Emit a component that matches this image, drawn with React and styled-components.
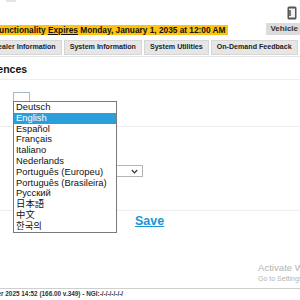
import styled, { createGlobalStyle } from "styled-components"

const Global = createGlobalStyle`
  html, body { margin: 0; padding: 0; background: #fff; overflow: hidden; }
  body { font-family: "Liberation Sans", Arial, sans-serif; color: #111; }
`

const Page = styled.div`
  width: 300px;
  height: 300px;
  position: relative;
  overflow: hidden;
  display: flex;
  flex-direction: column;
`

const TopStrip = styled.div`
  height: 23px;
  display: flex;
  justify-content: space-between;
  align-items: flex-start;
`

const Tick = styled.div`
  width: 10px;
  height: 2px;
  margin-left: 6px;
  background: #e4e4e4;
`

const DeviceIcon = styled.svg`
  width: 10px;
  height: 14px;
  margin-top: 6px;
  margin-right: 3px;
`

const BannerRow = styled.div`
  height: 12px;
  display: flex;
  justify-content: space-between;
  align-items: flex-end;
`

const Banner = styled.div`
  background: #ffc20e;
  height: 10px;
  line-height: 10px;
  font-size: 8.3px;
  font-weight: bold;
  white-space: nowrap;
  padding-right: 3px;
  margin-left: -6px;
  & u { text-decoration: underline; }
`

const VehicleButton = styled.div`
  background: #dcdcdc;
  height: 12px;
  line-height: 12px;
  font-size: 8px;
  font-weight: bold;
  padding: 0 6px 0 4px;
  margin-right: -4px;
  color: #333;
`

const Tabs = styled.div`
  margin-top: 5px;
  height: 15px;
  display: flex;
  gap: 2px;
  border-bottom: 1px solid #e4e4e4;
  padding-bottom: 1px;
`

const Tab = styled.div`
  background: #e6e6e6;
  border: 1px solid #d6d6d6;
  height: 13px;
  line-height: 13px;
  font-size: 7.1px;
  font-weight: bold;
  color: #222;
  padding: 0 5px;
  white-space: nowrap;
  margin-left: ${(p) => p.shift || "0"};
`

const Heading = styled.h2`
  margin: 5px 0 0 -33px;
  height: 12px;
  font-size: 10.5px;
  font-weight: bold;
  line-height: 14px;
  border-bottom: 1px solid #eeeeee;
  padding-bottom: 5px;
`

const FormRow = styled.div`
  height: ${(p) => p.h}px;
  border-bottom: 1px solid #eeeeee;
  position: relative;
  padding-left: 13px;
  box-sizing: border-box;
`

const SmallBox = styled.div`
  width: 15px;
  height: 9px;
  margin-top: 12px;
  border: 1px solid #a9b8c8;
  border-bottom: none;
`

const Select = styled.div`
  margin-top: 38px;
  width: 130px;
  height: 12px;
  border: 1px solid #b5b5b5;
  box-sizing: border-box;
  display: flex;
  justify-content: flex-end;
  align-items: center;
  padding-right: 4px;
`

const List = styled.ul`
  position: absolute;
  left: 13px;
  top: 101px;
  width: 104px;
  margin: 0;
  padding: 0;
  list-style: none;
  background: #fff;
  border: 1px solid #7a7a7a;
  box-sizing: border-box;
  z-index: 2;
`

const Option = styled.li`
  height: 10.8px;
  line-height: 10.8px;
  font-size: 9.4px;
  padding-left: 2px;
  font-family: "Liberation Sans", "Noto Sans CJK JP", sans-serif;
  background: ${(p) => (p.active ? "#2a9fdb" : "transparent")};
  color: ${(p) => (p.active ? "#fff" : "#111")};
  white-space: nowrap;
`

const SaveRow = styled.div`
  padding-left: 135px;
  padding-top: 0;
`

const SaveLink = styled.a`
  color: #1a96d4;
  font-size: 12.5px;
  font-weight: bold;
  text-decoration: underline;
  cursor: pointer;
`

const Spacer = styled.div`
  flex: 1;
`

const Footer = styled.div`
  border-top: 1px solid #cfcfcf;
  height: 11px;
  font-size: 6.4px;
  font-weight: bold;
  color: #333;
  line-height: 10px;
  white-space: nowrap;
  margin-left: -21px;
`

const Watermark = styled.div`
  position: absolute;
  left: 258px;
  top: 263px;
  color: #b4b4b4;
  white-space: nowrap;
  line-height: 1;
`

const WatermarkTitle = styled.div`
  font-size: 9.6px;
`

const WatermarkNote = styled.div`
  font-size: 7px;
  margin-top: 2px;
`

const Chevron = () => (
  <svg width="7" height="5" viewBox="0 0 7 5">
    <path d="M0.8 1 L3.5 3.8 L6.2 1" fill="none" stroke="#333" strokeWidth="1.2" />
  </svg>
)

const languages = [
  "Deutsch",
  "English",
  "Español",
  "Français",
  "Italiano",
  "Nederlands",
  "Português (Europeu)",
  "Português (Brasileira)",
  "Русский",
  "日本語",
  "中文",
  "한국의",
]

export default function App() {
  return (
    <Page>
      <Global />
      <TopStrip>
        <Tick />
        <DeviceIcon viewBox="0 0 10 14">
          <rect x="0.5" y="0.5" width="9" height="13" rx="1.5" fill="#555" />
          <rect x="2" y="2.5" width="6" height="9" fill="#f2f2f2" />
          <rect x="2" y="4" width="2" height="6" fill="#777" />
        </DeviceIcon>
      </TopStrip>
      <BannerRow>
        <Banner>
          Functionality <u>Expires</u> Monday, January 1, 2035 at 12:00 AM
        </Banner>
        <VehicleButton>Vehicle</VehicleButton>
      </BannerRow>
      <Tabs>
        <Tab shift="-13px">Dealer Information</Tab>
        <Tab>System Information</Tab>
        <Tab>System Utilities</Tab>
        <Tab>On-Demand Feedback</Tab>
      </Tabs>
      <Heading>Preferences</Heading>
      <FormRow h={47}>
        <SmallBox />
      </FormRow>
      <FormRow h={84}>
        <Select>
          <Chevron />
        </Select>
      </FormRow>
      <SaveRow>
        <SaveLink>Save</SaveLink>
      </SaveRow>
      <Spacer />
      <Footer>October 2025 14:52 (166.00 v.349) - NGI:-/-/-/-/-/-/</Footer>
      <List>
        {languages.map((l) => (
          <Option key={l} active={l === "English"}>
            {l}
          </Option>
        ))}
      </List>
      <Watermark>
        <WatermarkTitle>Activate Windows</WatermarkTitle>
        <WatermarkNote>Go to Settings to activate Windows.</WatermarkNote>
      </Watermark>
    </Page>
  )
}
